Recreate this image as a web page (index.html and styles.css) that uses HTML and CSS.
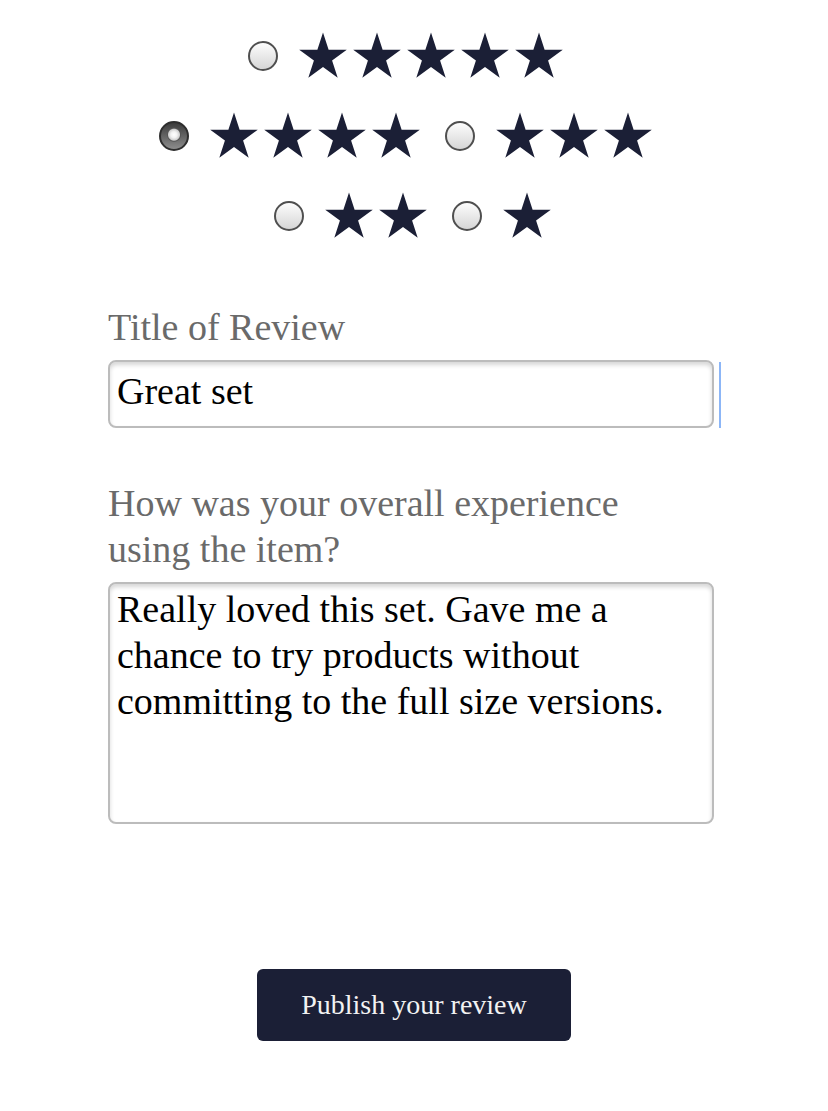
FILE: index.html
```html
<!DOCTYPE html>
<html>
  <head>
    <meta charset="utf-8" />
    <meta name="viewport" content="width=device-width, initial-scale=1" />
    <title>write a review</title>
    <link rel="stylesheet" href="styles.css">
  </head>
  <body>
    <svg class="sprite" aria-hidden="true">
      <symbol id="star" viewBox="0 0 48 46">
        <polygon points="24,0 29.61,17.27 47.78,17.27 33.08,27.95 38.69,45.23 24,34.55 9.31,45.23 14.92,27.95 0.22,17.27 18.39,17.27" />
      </symbol>
    </svg>
    <form class="review-form" action="index.html" method="post">
      <div class="rating">
        <div class="rating-row rating-row-shift">
          <label class="rating-option">
            <input class="rating-radio" type="radio" name="rating" value="5" />
            <span class="stars">
              <svg class="star"><use href="#star" /></svg>
              <svg class="star"><use href="#star" /></svg>
              <svg class="star"><use href="#star" /></svg>
              <svg class="star"><use href="#star" /></svg>
              <svg class="star"><use href="#star" /></svg>
            </span>
          </label>
        </div>
        <div class="rating-row rating-row-shift">
          <label class="rating-option">
            <input class="rating-radio" type="radio" name="rating" value="4" checked />
            <span class="stars">
              <svg class="star"><use href="#star" /></svg>
              <svg class="star"><use href="#star" /></svg>
              <svg class="star"><use href="#star" /></svg>
              <svg class="star"><use href="#star" /></svg>
            </span>
          </label>
          <label class="rating-option">
            <input class="rating-radio" type="radio" name="rating" value="3" />
            <span class="stars">
              <svg class="star"><use href="#star" /></svg>
              <svg class="star"><use href="#star" /></svg>
              <svg class="star"><use href="#star" /></svg>
            </span>
          </label>
        </div>
        <div class="rating-row">
          <label class="rating-option">
            <input class="rating-radio" type="radio" name="rating" value="2" />
            <span class="stars">
              <svg class="star"><use href="#star" /></svg>
              <svg class="star"><use href="#star" /></svg>
            </span>
          </label>
          <label class="rating-option">
            <input class="rating-radio" type="radio" name="rating" value="1" />
            <span class="stars">
              <svg class="star"><use href="#star" /></svg>
            </span>
          </label>
        </div>
      </div>

      <div class="form-group">
        <label class="field-label" for="title">Title of Review</label>
        <div class="input-row">
          <input class="field-input" id="title" type="text" name="title" value="Great set" autocomplete="off" />
          <span class="caret"></span>
        </div>
      </div>

      <div class="form-group form-group-body">
        <label class="field-label" for="body">How was your overall experience using the item?</label>
        <textarea class="field-textarea" id="body" name="body">Really loved this set. Gave me a chance to try products without committing to the full size versions.</textarea>
      </div>

      <div class="form-actions">
        <button class="publish" type="submit">Publish your review</button>
      </div>
    </form>
  </body>
</html>
```

FILE: styles.css
```css
body {
  margin: 0;
  background: #fff;
  font-family: "Liberation Serif", "Times New Roman", serif;
}
.sprite {
  display: block;
  width: 0;
  height: 0;
  overflow: hidden;
}
.review-form {
  display: flex;
  flex-direction: column;
}

/* star rating */
.rating {
  display: flex;
  flex-direction: column;
  gap: 33px;
  padding-top: 32px;
}
.rating-row {
  display: flex;
  justify-content: center;
  gap: 25px;
  padding-right: 4px;
}
.rating-row-shift {
  padding-right: 17px;
}
.rating-option {
  display: flex;
  align-items: center;
  gap: 21px;
  cursor: pointer;
}
.stars {
  display: flex;
  gap: 6px;
}
.star {
  width: 48px;
  height: 47px;
  fill: #1b1f36;
}
.rating-radio {
  -webkit-appearance: none;
  appearance: none;
  width: 30px;
  height: 30px;
  margin: 0;
  border: 2px solid #4f4f4f;
  border-radius: 50%;
  background: linear-gradient(#fdfdfd, #d6d6d6);
  cursor: pointer;
}
.rating-radio:checked {
  border-color: #2e2e2e;
  background: radial-gradient(circle at 50% 45%, #fff 0, #f2f2f2 3px, #cfcfcf 5.5px, #555 6.5px, transparent 7.5px),
    linear-gradient(#3c3c3c, #8c8c8c);
}

/* fields */
.form-group {
  display: flex;
  flex-direction: column;
  gap: 10px;
  width: 606px;
  margin: 65px 0 0 108px;
}
.form-group-body {
  margin-top: 52px;
  gap: 10px;
}
.field-label {
  max-width: 580px;
  font-size: 38px;
  line-height: 46px;
  color: #6a6a6a;
}
.input-row {
  display: flex;
  width: 613px;
}
.field-input {
  flex: 0 0 606px;
  box-sizing: border-box;
  height: 68px;
  padding: 0 7px 6px;
  border: 2px solid #bcbcbc;
  border-radius: 8px;
  box-shadow: inset 0 3px 4px rgba(0, 0, 0, 0.16);
  font-family: inherit;
  font-size: 38px;
  color: #000;
  outline: none;
}
.caret {
  width: 2px;
  margin: 2px 0 0 5px;
  background: #8cb6f7;
}
.field-textarea {
  box-sizing: border-box;
  width: 606px;
  height: 242px;
  padding: 2px 7px 0;
  border: 2px solid #bcbcbc;
  border-radius: 8px;
  box-shadow: inset 0 3px 4px rgba(0, 0, 0, 0.16);
  font-family: inherit;
  font-size: 38px;
  line-height: 46px;
  color: #000;
  resize: none;
  outline: none;
}

/* submit */
.form-actions {
  display: flex;
  justify-content: center;
  margin-top: 145px;
}
.publish {
  width: 314px;
  height: 72px;
  border: none;
  border-radius: 6px;
  background: #1b1f36;
  color: #f2f2f2;
  font-family: inherit;
  font-size: 28px;
  cursor: pointer;
}
```
